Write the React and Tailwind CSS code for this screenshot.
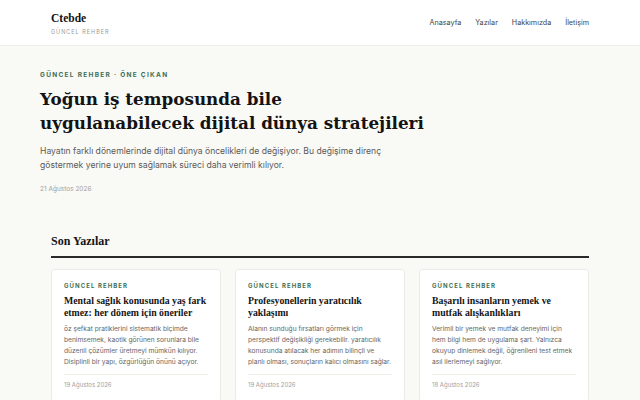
import React from 'react';

const serif = { fontFamily: '"DejaVu Serif", "Liberation Serif", serif' };
const serifNarrow = { fontFamily: '"Liberation Serif", "DejaVu Serif", serif' };

const posts = [
  {
    title: 'Mental sağlık konusunda yaş fark etmez: her dönem için öneriler',
    excerpt:
      'öz şefkat pratiklerini sistematik biçimde benimsemek, kaotik görünen sorunlara bile düzenli çözümler üretmeyi mümkün kılıyor. Disiplinli bir yapı, özgürlüğün önünü açıyor.',
    date: '19 Ağustos 2026',
  },
  {
    title: 'Profesyonellerin yaratıcılık yaklaşımı',
    excerpt:
      'Alanın sunduğu fırsatları görmek için perspektif değişikliği gerekebilir. yaratıcılık konusunda atılacak her adımın bilinçli ve planlı olması, sonuçların kalıcı olmasını sağlar.',
    date: '19 Ağustos 2026',
  },
  {
    title: 'Başarılı insanların yemek ve mutfak alışkanlıkları',
    excerpt:
      'Verimli bir yemek ve mutfak deneyimi için hem bilgi hem de uygulama şart. Yalnızca okuyup dinlemek değil, öğrenileni test etmek asıl ilerlemeyi sağlıyor.',
    date: '18 Ağustos 2026',
  },
];

function PostCard({ post }) {
  return (
    <article className="bg-white border border-[#ecebe6] rounded-[3px] px-3 pt-[11px] pb-3 flex flex-col">
      <div className="text-[6px] leading-[9px] font-bold tracking-[0.18em] text-[#3f6f55]">GÜNCEL REHBER</div>
      <h3 className="mt-[5px] text-[9.8px] leading-[12px] font-bold text-[#151515]" style={serifNarrow}>
        {post.title}
      </h3>
      <p className="mt-[5px] text-[6.65px] leading-[11px] text-[#666]">{post.excerpt}</p>
      <div className="mt-[6px] border-t border-[#efeee9] pt-[5px] text-[6px] leading-[9px] text-[#a0a0a0]">
        {post.date}
      </div>
    </article>
  );
}

export default function App() {
  return (
    <div className="w-[640px] h-[400px] overflow-hidden bg-[#f9f9f6]" style={{ fontFamily: 'Inter, "Liberation Sans", sans-serif' }}>
      <header className="bg-white border-b border-[#eeeeea] h-[46px]">
        <div className="mx-[51px] h-full flex items-center justify-between">
          <div className="pt-[1px]">
            <div className="text-[11.5px] leading-[16px] font-bold text-[#111]" style={serifNarrow}>Ctebde</div>
            <div className="mt-[2px] text-[5.5px] leading-[8px] tracking-[0.18em] text-[#9a9a9a]">GÜNCEL REHBER</div>
          </div>
          <nav className="flex gap-[14px] text-[7.2px] text-[#444] pt-[2px]">
            <span>Anasayfa</span>
            <span>Yazılar</span>
            <span>Hakkımızda</span>
            <span>İletişim</span>
          </nav>
        </div>
      </header>

      <section className="px-[40px] pt-[25px]">
        <div className="text-[6.5px] leading-[9px] font-bold tracking-[0.2em] text-[#3f6f55]">
          GÜNCEL REHBER · ÖNE ÇIKAN
        </div>
        <h1 className="mt-[7px] text-[16.8px] leading-[24px] font-bold text-[#131313] whitespace-nowrap" style={serif}>
          Yoğun iş temposunda bile
          <br />
          uygulanabilecek dijital dünya stratejileri
        </h1>
        <p className="mt-[10px] text-[8.6px] leading-[13.5px] text-[#5a5a5a] max-w-[345px]">
          Hayatın farklı dönemlerinde dijital dünya öncelikleri de değişiyor. Bu değişime direnç göstermek yerine uyum sağlamak süreci daha verimli kılıyor.
        </p>
        <div className="mt-[13px] text-[6.5px] leading-[9px] text-[#a0a0a0]">21 Ağustos 2026</div>
      </section>

      <section className="mx-[51px] mt-[39px]">
        <h2 className="text-[12px] leading-[16px] font-bold text-[#141414] pb-[7px] border-b-2 border-[#2a2a2a]" style={serifNarrow}>
          Son Yazılar
        </h2>
        <div className="mt-[11px] grid grid-cols-3 gap-[14px]">
          {posts.map((p, i) => (
            <PostCard key={i} post={p} />
          ))}
        </div>
      </section>
    </div>
  );
}
